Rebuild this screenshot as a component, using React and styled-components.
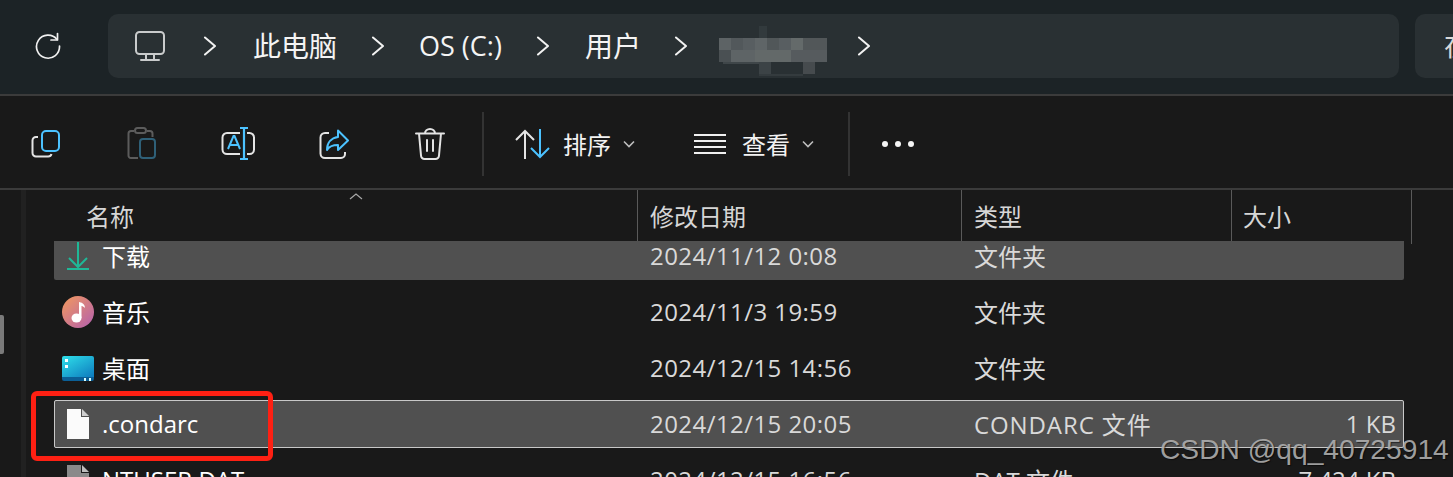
import React from "react";
import styled, { createGlobalStyle } from "styled-components";

const Global = createGlobalStyle`
  html, body { margin: 0; padding: 0; background: #191919; }
  * { box-sizing: border-box; }
`;
const Page = styled.div`
  position: relative; width: 1453px; height: 477px; overflow: hidden;
  background: #191919; color: #fff;
  font-family: "Open Sans", "Noto Sans CJK SC", sans-serif;
`;
const TopBar = styled.header`
  display: flex; align-items: flex-start; height: 96px; padding: 14px 0 0 0;
  background: #1c2326; border-bottom: 2px solid #3b3b3b; white-space: nowrap;
`;
const RefreshSlot = styled.div`
  width: 108px; height: 64px; display: flex; align-items: center; padding-left: 34px; flex: none;
`;
const AddressBar = styled.nav`
  flex: none; width: 1291px; height: 64px; border-radius: 10px; background: #293033;
  display: flex; align-items: center; padding-left: 27px;
`;
const Crumb = styled.span`
  font-size: ${p => p.$size || 28}px; line-height: 64px; color: #f4f4f4;
  margin-left: ${p => p.$before}px;
`;
const Chevron = styled.svg`
  flex: none; margin-left: ${p => p.$before}px;
`;
const Mosaic = styled.svg`
  flex: none; margin-left: 32px; align-self: flex-start; margin-top: 12px;
`;
const SearchBox = styled.div`
  flex: none; margin-left: 16px; width: 200px; height: 64px; border-radius: 10px 0 0 10px;
  background: #293033; padding-left: 29px; font-size: 27px; line-height: 64px; color: #d8d8d8;
`;
const Toolbar = styled.div`
  display: flex; align-items: center; gap: 4px; height: 94px; padding-top: 3px;
  border-bottom: 2px solid #3b3b3b; background: #191919;
`;
const IconSlot = styled.div`
  width: 92px; height: 60px; display: flex; align-items: center; justify-content: center; flex: none;
`;
const Sep = styled.div`
  width: 2px; height: 64px; background: #333; flex: none; margin-left: ${p => p.$left || 0}px;
`;
const ToolLabel = styled.div`
  display: flex; align-items: center; flex: none; margin-left: ${p => p.$left}px;
`;
const ToolText = styled.span`
  font-size: 24px; line-height: 32px; color: #f2f2f2; padding-top: 3px;
  margin-left: ${p => p.$left}px; margin-right: 12px;
`;
const Dots = styled.div`
  display: flex; gap: 7px; margin-left: 28px;
`;
const Dot = styled.i`
  width: 6px; height: 6px; border-radius: 50%; background: #f5f5f5; display: block;
`;
const Content = styled.div`
  display: flex; height: 287px;
`;
const Rail = styled.aside`
  flex: none; width: 26px; border-right: 5px solid #212121; padding-top: 125px;
`;
const Thumb = styled.div`
  width: 4px; height: 39px; background: #7a7a7a; border-radius: 0 2px 2px 0;
`;
const Main = styled.main`
  position: relative; flex: none; width: 1427px; display: flex; flex-direction: column;
`;
const SortCaret = styled.svg`
  position: absolute; left: 322px; top: 2px;
`;
const HeadRow = styled.div`
  display: grid; grid-template-columns: 612px 324px 270px 180px; height: 51px; flex: none;
`;
const HeadCell = styled.div`
  border-right: 1px solid #5a5a5a; font-size: 24px; line-height: 54px; color: #d6d6d6;
  padding-left: ${p => p.$pad}px;
`;
const List = styled.div`
  flex: 1; overflow: hidden; padding-left: 28px;
`;
const Rows = styled.div`
  margin-top: -9px; display: flex; flex-direction: column; gap: 8px; width: 1350px;
`;
const Row = styled.div`
  height: 48px; flex: none; display: grid; grid-template-columns: 48px 548px 324px 1fr 1fr;
  align-items: center; font-size: 24px; border-radius: 2px;
  background: ${p => (p.$active ? "#505050" : "transparent")};
  outline: ${p => (p.$focus ? "1px solid #c8c8c8" : "none")};
  outline-offset: -1px;
`;
const RowIcon = styled.div`
  display: flex; justify-content: center; height: 48px; align-items: center;
`;
const NameCell = styled.span`
  color: #fff; margin-top: -2px;
`;
const DateCell = styled.span`
  color: #d9d9d9; letter-spacing: .44px; margin-top: -2px;
`;
const TypeCell = styled.span`
  color: #d9d9d9; letter-spacing: ${p => p.$spacing || 0}px; margin-top: -2px; white-space: nowrap;
`;
const SizeCell = styled.span`
  color: #d9d9d9; text-align: right; padding-right: 8px; margin-top: -2px; grid-column: 5;
`;
const RedBox = styled.div`
  position: absolute; left: 31px; top: 391px; width: 242px; height: 70px;
  border: 5px solid #fe2013; border-radius: 6px;
`;
const Watermark = styled.div`
  position: absolute; left: 1160px; top: 433px; font-family: "Liberation Sans", Arial, sans-serif;
  font-size: 28.2px; line-height: 32px; color: rgba(178,178,178,.88); text-shadow: 1px 1px 1px rgba(0,0,0,.5);
  white-space: nowrap;
`;

const CrumbChevron = ({ before }) => (
  <Chevron $before={before} width="13" height="20" viewBox="0 0 13 20" fill="none">
    <path d="M2 1.500l10 8.500-10 8.500" stroke="#f2f2f2" strokeWidth="2" strokeLinecap="round" strokeLinejoin="round" />
  </Chevron>
);
const Small = () => (
  <svg width="12" height="8" viewBox="0 0 12 8" fill="none">
    <path d="M1 1.500l5 5 5-5" stroke="#bdbdbd" strokeWidth="1.600" />
  </svg>
);

const blue = "#4cc2ff";
const gray = "#e4e4e4";

const mosaicCells = [
  [40, 0, 8, 12, "#323a3d"],
  [0, 12, 12, 12, "#5d6365"], [12, 12, 12, 12, "#52585b"], [24, 12, 12, 12, "#585e61"], [36, 12, 12, 12, "#5f6567"],
  [48, 12, 12, 12, "#515759"], [60, 12, 12, 12, "#585e61"], [72, 12, 12, 12, "#646a6a"], [84, 12, 24, 12, "#525759"],
  [0, 24, 12, 12, "#4a5053"], [12, 24, 24, 12, "#5e6466"], [36, 24, 36, 12, "#636969"], [72, 24, 36, 12, "#565b5e"],
  [4, 36, 36, 2, "#3f4649"], [40, 36, 12, 12, "#3c4346"], [84, 36, 12, 12, "#464b4e"],
  [40, 48, 44, 2, "#343b3e"],
];

const rows = [
  { id: "dl", name: "下载", date: "2024/11/12 0:08", type: "文件夹", active: true, icon: (
    <svg width="24" height="28" viewBox="0 0 24 28" fill="none" stroke="#1fb897" strokeWidth="2">
      <path d="M12 0v25M3 16l9 9 9-9" /><path d="M1 27h22" />
    </svg>) },
  { id: "music", name: "音乐", date: "2024/11/3 19:59", type: "文件夹", icon: (
    <svg width="32" height="32" viewBox="0 0 32 32">
      <defs><linearGradient id="mg" x1="0" y1="0" x2="1" y2="1"><stop offset="0" stopColor="#f39a5c" /><stop offset="1" stopColor="#b35fb0" /></linearGradient></defs>
      <circle cx="16" cy="16" r="16" fill="url(#mg)" />
      <ellipse cx="14.500" cy="22" rx="5" ry="4.500" fill="#fff" />
      <path d="M17 22V6c2 .2 6 1.500 6 6-1.500-1.500-3-2-3.500-2V22z" fill="#fff" />
    </svg>) },
  { id: "desk", name: "桌面", date: "2024/12/15 14:56", type: "文件夹", icon: (
    <svg width="32" height="25" viewBox="0 0 32 25">
      <defs><linearGradient id="dg" x1="0" y1="0" x2=".8" y2="1"><stop offset="0" stopColor="#2fe0ea" /><stop offset="1" stopColor="#0f7fc0" /></linearGradient></defs>
      <rect width="32" height="23" rx="2" fill="url(#dg)" />
      <path d="M0 21h32v2a2 2 0 0 1-2 2H2a2 2 0 0 1-2-2z" fill="#0b5f96" />
      <rect x="3" y="3" width="3" height="3" fill="#fff" /><rect x="3" y="9" width="3" height="3" fill="#fff" />
      <rect x="22" y="22" width="2" height="3" fill="#dff" /><rect x="27" y="22" width="2" height="3" fill="#dff" />
    </svg>) },
  { id: "conda", name: ".condarc", date: "2024/12/15 20:05", type: "CONDARC 文件", spacing: 0.9, size: "1 KB", active: true, focus: true, icon: (
    <svg width="24" height="30" viewBox="0 0 24 30">
      <path d="M1 0h14v8h8v22H1z" fill="#fbfbfb" /><path d="M16 0l7 7h-7z" fill="#cfcfcf" />
    </svg>) },
  { id: "nt", name: "NTUSER.DAT", date: "2024/12/15 16:56", type: "DAT 文件", size: "7,424 KB", icon: (
    <svg width="24" height="30" viewBox="0 0 24 30">
      <path d="M1 0h14v8h8v22H1z" fill="#8a8a8a" /><path d="M16 0l7 7h-7z" fill="#bdbdbd" />
    </svg>) },
];

export default function App() {
  return (
    <Page>
      <Global />
      <TopBar>
        <RefreshSlot>
          <svg width="28" height="28" viewBox="0 0 28 28" fill="none" stroke="#f0f0f0" strokeWidth="1.700" strokeLinecap="round" strokeLinejoin="round">
            <path d="M23 7.500A11.500 11.500 0 1 0 25.500 14" /><path d="M23.500 1.500v6.500h-6.500" />
          </svg>
        </RefreshSlot>
        <AddressBar>
          <svg width="30" height="30" viewBox="0 0 30 30" fill="none" stroke="#c9cbcc" strokeWidth="2" strokeLinecap="round">
            <rect x="1" y="1" width="28" height="22" rx="3.500" /><path d="M11 23v5M19 23v5M6 29h18" />
          </svg>
          <CrumbChevron before={38} />
          <Crumb $before={37}>此电脑</Crumb>
          <CrumbChevron before={34} />
          <Crumb $before={35} $size={27}>OS (C:)</Crumb>
          <CrumbChevron before={34} />
          <Crumb $before={36}>用户</Crumb>
          <CrumbChevron before={33} />
          <Mosaic width="108" height="52" viewBox="0 0 108 52">
            {mosaicCells.map(([x, y, w, h, c], i) => <rect key={i} x={x} y={y} width={w} height={h} fill={c} />)}
          </Mosaic>
          <CrumbChevron before={30} />
        </AddressBar>
        <SearchBox>在 此电脑 中搜索</SearchBox>
      </TopBar>

      <Toolbar>
        <IconSlot>
          <svg width="30" height="30" viewBox="0 0 30 30" fill="none" strokeWidth="2">
            <path d="M7 8H5a3.500 3.500 0 0 0-3.500 3.500V24A3.500 3.500 0 0 0 5 27.500h12a3.500 3.500 0 0 0 3.500-2.500" stroke={gray} />
            <rect x="11" y="2" width="17" height="20" rx="4" stroke={blue} />
          </svg>
        </IconSlot>
        <IconSlot>
          <svg width="30" height="34" viewBox="0 0 30 34" fill="none" strokeWidth="2">
            <path d="M7 4H4a2.500 2.500 0 0 0-2.500 2.500V28A2.500 2.500 0 0 0 4 31h7M20 4h3a2.500 2.500 0 0 1 2.500 2.500V10" stroke="#5c5c5c" />
            <rect x="8" y="1" width="11" height="5" rx="2.500" stroke="#5c5c5c" />
            <rect x="13" y="12" width="15" height="19" rx="3" stroke="#2f6078" />
          </svg>
        </IconSlot>
        <IconSlot>
          <svg width="34" height="34" viewBox="0 0 34 34" fill="none" strokeWidth="2">
            <path d="M19 6H6a4.500 4.500 0 0 0-4.500 4.500v12A4.500 4.500 0 0 0 6 27h13M26 6h2.500A4.500 4.500 0 0 1 33 10.500v12a4.500 4.500 0 0 1-4.500 4.500H26" stroke={gray} />
            <path d="M19 1h8M23 1v31M19 32h8" stroke={blue} strokeWidth="2.200" />
            <path d="M7 22l5.500-13h1L19 22M9 18h8" stroke={blue} />
          </svg>
        </IconSlot>
        <IconSlot>
          <svg width="30" height="30" viewBox="0 0 30 30" fill="none" strokeWidth="2">
            <path d="M10 4H6a4.500 4.500 0 0 0-4.500 4.500v16A4.500 4.500 0 0 0 6 29h16a4 4 0 0 0 4-4v-2" stroke={gray} />
            <path d="M19 1.500L29 11.500 19 21v-5c-5 0-9 1.500-11 5 0-7 4-12 11-13z" stroke={blue} strokeLinejoin="round" />
          </svg>
        </IconSlot>
        <IconSlot>
          <svg width="30" height="32" viewBox="0 0 30 32" fill="none" stroke={gray} strokeWidth="2" strokeLinecap="round" strokeLinejoin="round">
            <path d="M1 5.500h28M10 5.500a5 4.500 0 0 1 10 0M4 5.500l2 22A3.500 3.500 0 0 0 9.500 31h11a3.500 3.500 0 0 0 3.500-3.500l2-22M12 12v11M18 12v11" />
          </svg>
        </IconSlot>
        <Sep $left={2} />
        <ToolLabel $left={27}>
          <svg width="36" height="30" viewBox="0 0 36 30" fill="none" strokeWidth="2">
            <path d="M10 30V2M1 11l9-9 9 9" stroke={gray} />
            <path d="M25 0v28M16 19l9 9 9-9" stroke={blue} />
          </svg>
          <ToolText $left={12}>排序</ToolText>
          <Small />
        </ToolLabel>
        <ToolLabel $left={55}>
          <svg width="32" height="20" viewBox="0 0 32 20" fill="none" stroke="#efefef" strokeWidth="2">
            <path d="M0 1h32M0 7h32M0 13h32M0 19h32" />
          </svg>
          <ToolText $left={16}>查看</ToolText>
          <Small />
        </ToolLabel>
        <Sep $left={30} />
        <Dots><Dot /><Dot /><Dot /></Dots>
      </Toolbar>

      <Content>
        <Rail><Thumb /></Rail>
        <Main>
          <SortCaret width="16" height="8" viewBox="0 0 16 8" fill="none">
            <path d="M2 7l6-5 6 5" stroke="#a8a8a8" strokeWidth="1.200" />
          </SortCaret>
          <HeadRow>
            <HeadCell $pad={60}>名称</HeadCell>
            <HeadCell $pad={12}>修改日期</HeadCell>
            <HeadCell $pad={12}>类型</HeadCell>
            <HeadCell $pad={11}>大小</HeadCell>
          </HeadRow>
          <List>
            <Rows>
              {rows.map(r => (
                <Row key={r.id} $active={r.active} $focus={r.focus}>
                  <RowIcon>{r.icon}</RowIcon>
                  <NameCell>{r.name}</NameCell>
                  <DateCell>{r.date}</DateCell>
                  <TypeCell $spacing={r.spacing}>{r.type}</TypeCell>
                  {r.size && <SizeCell>{r.size}</SizeCell>}
                </Row>
              ))}
            </Rows>
          </List>
        </Main>
      </Content>
      <RedBox />
      <Watermark>CSDN @qq_40725914</Watermark>
    </Page>
  );
}
